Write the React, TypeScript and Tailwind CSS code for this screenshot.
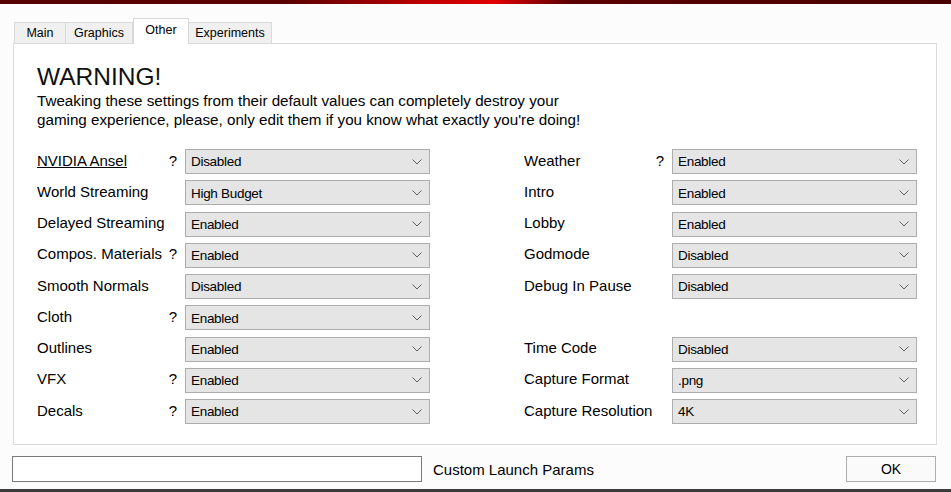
import React from 'react';

type Row = { label: string; help?: boolean; value: string; underline?: boolean } | null;

const left: Row[] = [
  { label: 'NVIDIA Ansel', help: true, value: 'Disabled', underline: true },
  { label: 'World Streaming', value: 'High Budget' },
  { label: 'Delayed Streaming', value: 'Enabled' },
  { label: 'Compos. Materials', help: true, value: 'Enabled' },
  { label: 'Smooth Normals', value: 'Disabled' },
  { label: 'Cloth', help: true, value: 'Enabled' },
  { label: 'Outlines', value: 'Enabled' },
  { label: 'VFX', help: true, value: 'Enabled' },
  { label: 'Decals', help: true, value: 'Enabled' },
];

const right: Row[] = [
  { label: 'Weather', help: true, value: 'Enabled' },
  { label: 'Intro', value: 'Enabled' },
  { label: 'Lobby', value: 'Enabled' },
  { label: 'Godmode', value: 'Disabled' },
  { label: 'Debug In Pause', value: 'Disabled' },
  null,
  { label: 'Time Code', value: 'Disabled' },
  { label: 'Capture Format', value: '.png' },
  { label: 'Capture Resolution', value: '4K' },
];

function Chevron() {
  return (
    <svg width="10" height="6" viewBox="0 0 10 6" className="text-[#606060]">
      <path d="M0.5 0.5 L5 5 L9.5 0.5" fill="none" stroke="currentColor" strokeWidth="1" />
    </svg>
  );
}

function Select({ value }: { value: string }) {
  return (
    <div className="flex h-[25px] w-[245px] items-center justify-between border border-[#adadad] bg-[#e5e5e5] pl-[5px] pr-[7px] text-[13.5px] tracking-[-0.3px]">
      <span className="pt-px">{value}</span>
      <Chevron />
    </div>
  );
}

function Column({ rows }: { rows: Row[] }) {
  return (
    <div className="flex flex-col gap-y-[6.25px]">
      {rows.map((r, i) =>
        r ? (
          <div key={i} className="flex h-[25px] items-center">
            <div className="flex w-[148px] items-center justify-between pb-[3px]">
              <span className={r.underline ? 'underline' : ''}>{r.label}</span>
              {r.help && <span className="pr-[8px]">?</span>}
            </div>
            <Select value={r.value} />
          </div>
        ) : (
          <div key={i} className="h-[25px]" />
        )
      )}
    </div>
  );
}

export default function App() {
  return (
    <main
      className="relative flex h-[492px] w-[951px] flex-col overflow-hidden bg-[#fcfcfc] text-[15px] text-[#000] leading-none"
      style={{ fontFamily: '"Liberation Sans", Arial, sans-serif' }}
    >
      <div className="h-[4px] w-full bg-[linear-gradient(90deg,#560000_0%,#5a0000_30%,#c00000_45%,#e00000_52%,#5a0000_60%,#4a0000_100%)]" />

      <div className="flex items-end pl-[14px] pt-[14px] text-[12.5px]">
        <div className="flex h-[21px] w-[52px] items-center justify-center border border-b-0 border-[#d9d9d9] bg-[#f0f0f0]">Main</div>
        <div className="flex h-[21px] w-[67px] items-center justify-center border border-b-0 border-l-0 border-[#d9d9d9] bg-[#f0f0f0]">Graphics</div>
        <div className="relative z-10 -mb-px flex h-[26px] w-[56px] items-start justify-center border border-b-0 border-[#d9d9d9] bg-white pt-[5px]">Other</div>
        <div className="flex h-[21px] w-[83px] items-center justify-center border border-b-0 border-l-0 border-[#d9d9d9] bg-[#f0f0f0]">Experiments</div>
      </div>

      <section className="ml-[13px] h-[402px] w-[924px] border border-[#dadada] bg-white pl-[23px] pt-[21px]">
        <h1 className="text-[24.5px] leading-[24px] text-[#111]">WARNING!</h1>
        <p className="mt-[2px] text-[15.2px] leading-[19px]">
          Tweaking these settings from their default values can completely destroy your
          <br />
          gaming experience, please, only edit them if you know what exactly you're doing!
        </p>
        <div className="mt-[20px] flex gap-x-[94px]">
          <Column rows={left} />
          <Column rows={right} />
        </div>
      </section>

      <div className="mt-[11px] flex items-center pl-[12px]">
        <div className="h-[26px] w-[410px] border border-[#7a7a7a] bg-white" />
        <span className="ml-[11px]">Custom Launch Params</span>
        <button className="ml-auto mr-[15px] flex h-[26px] w-[90px] items-center justify-center border border-[#adadad] bg-[#fafafa] text-[14px]">
          OK
        </button>
      </div>

      <div className="absolute bottom-0 left-0 h-[3px] w-full bg-[#3c3c3c]" />
    </main>
  );
}
